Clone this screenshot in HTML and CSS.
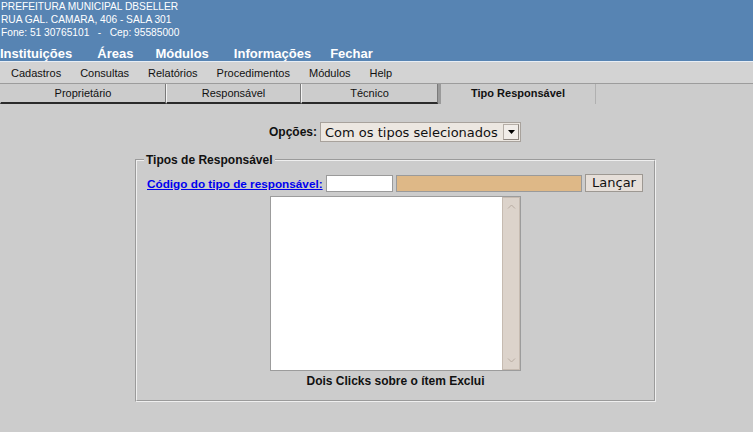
FILE: index.html
```html
<!DOCTYPE html>
<html lang="pt">
<head>
<meta charset="utf-8">
<title>Tipo Responsável</title>
<link rel="stylesheet" href="styles.css">
</head>
<body>
<div class="header">
  <div class="info">
    <div>PREFEITURA MUNICIPAL DBSELLER</div>
    <div>RUA GAL. CAMARA, 406 - SALA 301</div>
    <div>Fone: 51 30765101 &nbsp;&nbsp;- &nbsp;&nbsp;Cep: 95585000</div>
  </div>
  <div class="mainmenu">
    <span class="m1">Instituições</span>
    <span class="m2">Áreas</span>
    <span class="m3">Módulos</span>
    <span class="m4">Informações</span>
    <span>Fechar</span>
  </div>
</div>
<div class="submenu">
  <span>Cadastros</span>
  <span>Consultas</span>
  <span>Relatórios</span>
  <span>Procedimentos</span>
  <span>Módulos</span>
  <span>Help</span>
</div>
<div class="tabs">
  <div class="tab t1">Proprietário</div>
  <div class="tab t2">Responsável</div>
  <div class="tab t3">Técnico</div>
  <div class="tab active t4">Tipo Responsável</div>
</div>
<div class="content">
  <div class="options">
    <span class="opt-label">Opções:</span>
    <div class="combo">
      <span class="combo-text">Com os tipos selecionados</span>
      <span class="combo-btn"><svg width="7" height="4" viewBox="0 0 7 4"><path d="M0 0h7L3.5 4z" fill="#000"/></svg></span>
    </div>
  </div>
  <fieldset class="group">
    <legend>Tipos de Responsável</legend>
    <div class="row">
      <a class="link" href="#">Código do tipo de responsável:</a>
      <span class="inp code"></span>
      <span class="inp desc"></span>
      <span class="btn">Lançar</span>
    </div>
    <div class="listwrap">
      <div class="list">
        <div class="list-body"></div>
        <div class="scroll">
          <svg width="9" height="5" viewBox="0 0 9 5"><path d="M1 4.5L4.5 1L8 4.5" fill="none" stroke="#b8aca2" stroke-width="1"/></svg>
          <svg width="9" height="5" viewBox="0 0 9 5"><path d="M1 0.5L4.5 4L8 0.5" fill="none" stroke="#b8aca2" stroke-width="1"/></svg>
        </div>
      </div>
      <div class="hint">Dois Clicks sobre o ítem Exclui</div>
    </div>
  </fieldset>
</div>
</body>
</html>
```
FILE: styles.css
```css
html, body {
  margin: 0;
  padding: 0;
}
body {
  background: #cccccc;
  font-family: "Liberation Sans", Arial, sans-serif;
  color: #000;
  width: 753px;
  height: 432px;
  overflow: hidden;
}
.header {
  background: #5784b3;
  color: #fff;
  height: 61px;
  border-bottom: 1px solid #e8eef5;
}
.info {
  font-size: 10.2px;
  line-height: 13px;
  padding-left: 1px;
  white-space: nowrap;
}
.mainmenu {
  margin-top: 7px;
  font-size: 13px;
  font-weight: bold;
  line-height: 15px;
  display: flex;
  white-space: nowrap;
}
.mainmenu span { margin-right: 25px; }
.mainmenu .m2 { margin-right: 22px; }
.mainmenu .m4 { margin-right: 19px; }
.submenu {
  background: #d3d3d3;
  height: 21px;
  border-bottom: 1px solid #9c9c9c;
  display: flex;
  align-items: center;
  gap: 19px;
  padding-left: 11px;
  font-size: 11px;
  color: #111;
}
.tabs {
  display: flex;
  height: 20px;
}
.tab {
  box-sizing: border-box;
  height: 20px;
  font-size: 11px;
  color: #111;
  text-align: center;
  line-height: 18px;
  border-left: 1px solid #f4f4f4;
  border-right: 1px solid #7a7a7a;
  border-bottom: 2px solid #2a2a2a;
}
.t1 { width: 166px; border-left-color: #cccccc; }
.t2 { width: 135px; }
.t3 { width: 137px; }
.t4 {
  width: 158px;
  font-weight: bold;
  border-left: 3px solid #9a9a9a;
  border-right: 1px solid #b0b0b0;
  border-bottom: none;
  line-height: 19px;
}
.content {
  padding-top: 18px;
}
.options {
  display: flex;
  align-items: center;
  height: 20px;
}
.opt-label {
  margin-left: 269px;
  font-size: 12px;
  font-weight: bold;
  color: #111;
  width: 51px;
}
.combo {
  box-sizing: border-box;
  width: 201px;
  height: 20px;
  background: #ece7e1;
  border: 1px solid #a8a29c;
  display: flex;
  align-items: center;
  font-family: "DejaVu Sans", sans-serif;
  font-size: 13px;
  color: #111;
}
.combo-text {
  flex: 1;
  padding-left: 4px;
}
.combo-btn {
  box-sizing: border-box;
  width: 16px;
  height: 16px;
  margin-right: 1px;
  background: #f1ede9;
  border: 1px solid #b5aea7;
  border-right-color: #8c857f;
  border-bottom-color: #8c857f;
  display: flex;
  align-items: center;
  justify-content: center;
}
.group {
  box-sizing: border-box;
  margin: 11px 0 0 135px;
  width: 521px;
  height: 249px;
  padding: 0 0 0 10px;
  border: 2px groove #efefef;
  min-width: 0;
}
.group legend {
  margin-left: -3px;
  padding: 0 2px;
  font-size: 12px;
  font-weight: bold;
  color: #111;
  line-height: 14px;
}
.row {
  display: flex;
  align-items: center;
  margin-top: 7px;
  height: 18px;
}
.link {
  font-size: 11.75px;
  font-weight: bold;
  color: #0000ee;
  text-decoration: underline;
  white-space: nowrap;
  width: 179px;
}
.inp {
  box-sizing: border-box;
  height: 17px;
  border: 1px solid #9a9a9a;
  margin-top: 1px;
}
.code {
  width: 67px;
  background: #fff;
}
.desc {
  width: 186px;
  margin-left: 3px;
  background: #deb887;
}
.btn {
  box-sizing: border-box;
  margin-left: 3px;
  width: 58px;
  height: 18px;
  background: #e6dfd9;
  border: 1px solid #9d9892;
  font-family: "DejaVu Sans", sans-serif;
  font-size: 13px;
  line-height: 15px;
  text-align: center;
  color: #111;
}
.listwrap {
  display: flex;
  flex-direction: column;
  align-items: center;
  margin-left: -10px;
  margin-top: 4px;
}
.list {
  box-sizing: border-box;
  width: 251px;
  height: 175px;
  border: 1px solid #9c9c9c;
  background: #fff;
  display: flex;
}
.list-body { flex: 1; }
.scroll {
  box-sizing: border-box;
  width: 18px;
  background: #dcd3cb;
  border: 1px solid #c6bbb1;
  display: flex;
  flex-direction: column;
  justify-content: space-between;
  align-items: center;
  padding: 6px 0 6px;
}
.hint {
  margin-top: 3px;
  font-size: 12px;
  font-weight: bold;
  color: #111;
  line-height: 14px;
}
```
